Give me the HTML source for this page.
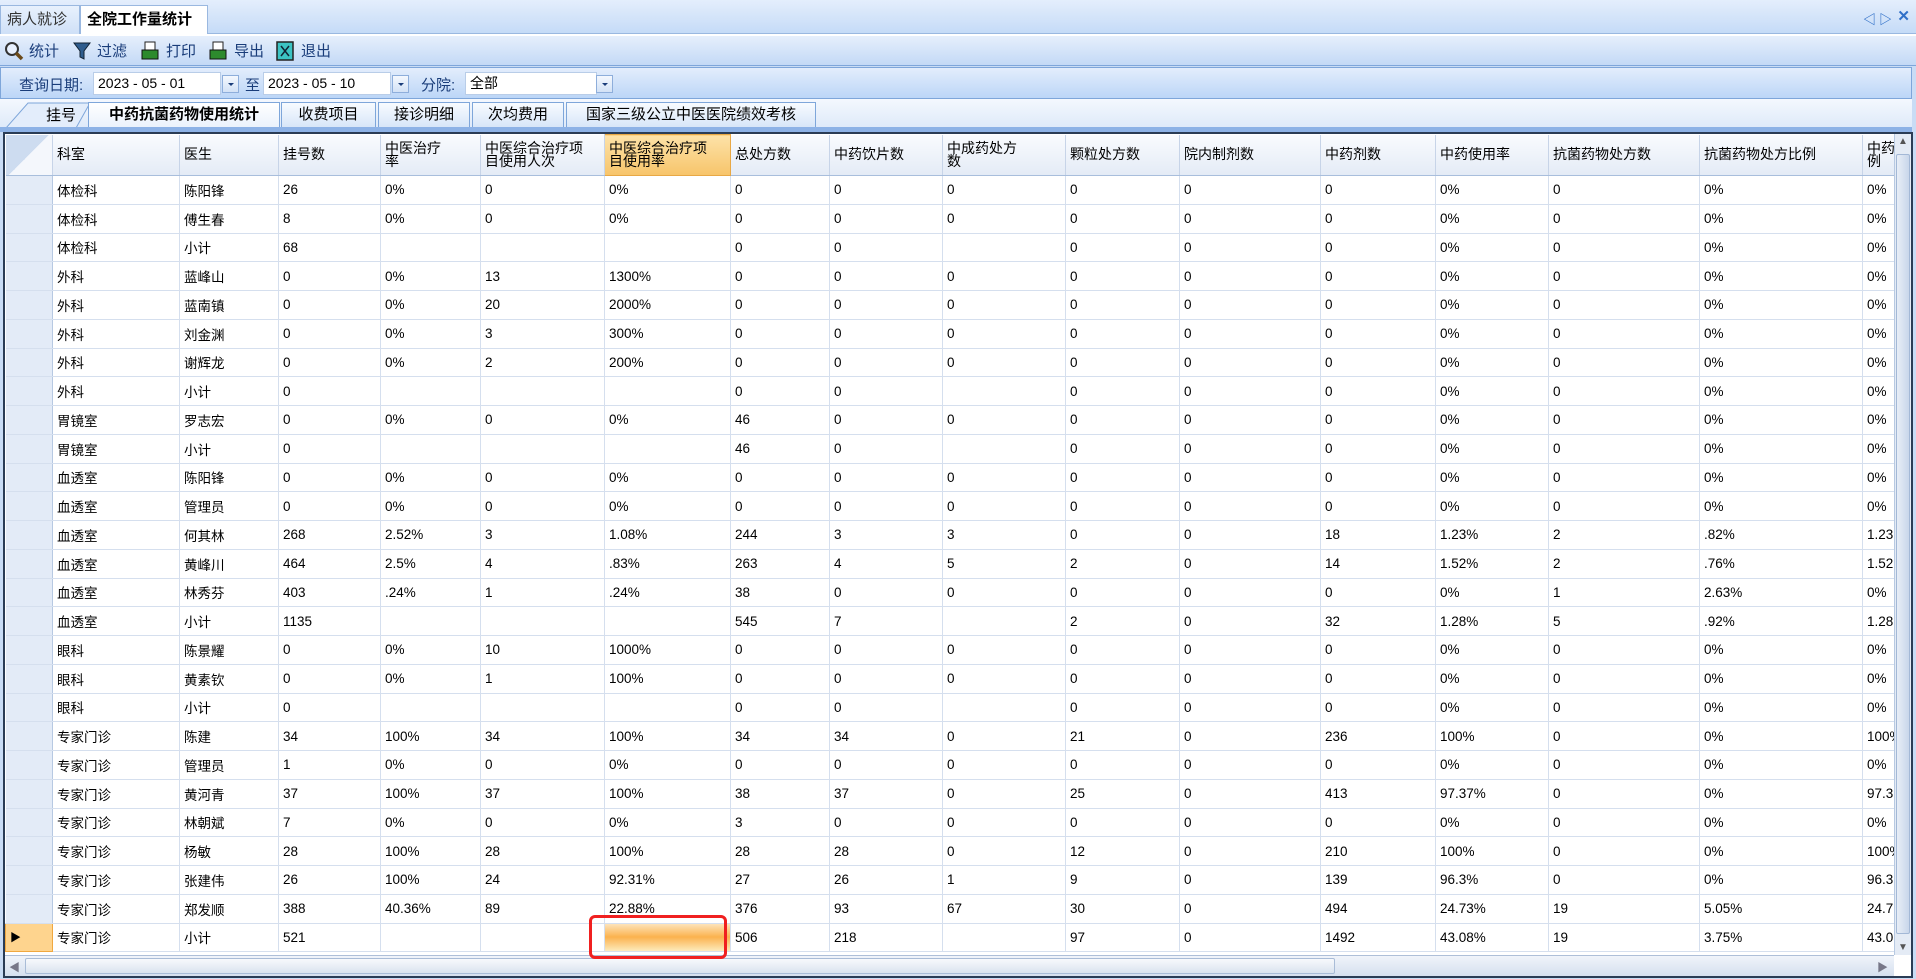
<!DOCTYPE html>
<html><head><meta charset="utf-8">
<style>
*{margin:0;padding:0;box-sizing:border-box}
body{width:1916px;height:979px;overflow:hidden;background:#c9dcf5;font-family:"Liberation Sans","Noto Sans CJK SC",sans-serif;font-size:14px;color:#000;position:relative}
.abs{position:absolute}
#title{left:0;top:0;width:1916px;height:34px;background:linear-gradient(#e4eefc,#c5dbf7);border-bottom:1px solid #9ab8e0}
.ttab{position:absolute;top:5px;height:29px;line-height:27px;font-size:15px;padding:0 6px}
#toolbar{left:0;top:34px;width:1916px;height:32px;background:linear-gradient(#e6effc,#c3d9f6);border-top:2px solid #fff;border-bottom:1px solid #7ea6da}
.tb{position:absolute;top:6px;font-size:15px;color:#1a3d7a;line-height:20px}
.ic{position:absolute;top:5px;width:20px;height:20px}
#filter{left:0;top:67px;width:1912px;height:32px;background:linear-gradient(#e3edfc,#bcd6f7);border:1px solid #7ea6da}
.lbl{position:absolute;top:6px;font-size:15px;color:#1a3d7a}
.inp{position:absolute;top:4px;height:23px;background:#fff;border:1px solid #b9cde8;font-size:14px;line-height:21px;padding-left:4px;white-space:pre}
.dd{position:absolute;top:7px;width:17px;height:18px;background:linear-gradient(#f4f8fe,#d3e2f6);border:1px solid #8eaedb}
.dd:after{content:"";position:absolute;left:5px;top:7px;border-left:3px solid transparent;border-right:3px solid transparent;border-top:3px solid #1a3d7a}
#tabs{left:0;top:99px;width:1912px;height:30px;background:linear-gradient(#f4f8fe,#dde9f9)}
.tab{position:absolute;top:3px;height:26px;line-height:24px;font-size:15px;text-align:center;background:linear-gradient(#f8fbff,#d6e5f8);border:1px solid #7ea6da;border-bottom:none}
#tabline{left:0;top:127px;width:1912px;height:5px;background:#8db2e6}
#grid{left:3px;top:132px;width:1910px;height:846px;background:#fff;border:2px solid #2a3c55;overflow:hidden}
table{border-collapse:collapse;table-layout:fixed;position:absolute;left:0;top:0}
td{border-right:1px solid #d5dfee;border-bottom:1px solid #d5dfee;height:28.75px;padding:0 0 0 4px;white-space:nowrap;overflow:hidden;font-size:13.5px;font-family:"Liberation Sans","Noto Sans CJK SC",sans-serif}
td:first-child{background:#e3ebf7;border-right:1px solid #b7c9e2}
tr.h td{height:41px;background:linear-gradient(#f9fbfe,#e4ebf6);border-right:1px solid #c7d4e8;border-bottom:1px solid #a8bedc;line-height:13px;font-size:14px;white-space:nowrap}
tr.h td.or{background:linear-gradient(#fde2a8,#f7c46a);border:1px solid #e8a845}
#vs{right:0;top:0;width:17px;height:821px;background:#e4ebf5;border-left:1px solid #b7c9e2}
#hs{left:0;bottom:0;width:1889px;height:21px;background:linear-gradient(#f0f4fa,#d5e0ef);border-top:1px solid #aebfd8}
</style></head><body>
<div id="title" class="abs">
 <div class="ttab" style="left:0;width:80px;background:linear-gradient(#e8f1fd,#cfe0f7);border:1px solid #9ab8e0;border-bottom:none;color:#333">病人就诊</div>
 <div class="ttab" style="left:80px;width:128px;background:#fff;border:1px solid #9ab8e0;border-bottom:none;font-weight:bold">全院工作量统计</div>
 <div class="abs" style="right:40px;top:9px;color:#3070c8;font-size:13px;font-weight:bold">◁</div>
 <div class="abs" style="right:24px;top:9px;color:#3070c8;font-size:13px;font-weight:bold">▷</div>
 <div class="abs" style="right:6px;top:7px;color:#3070c8;font-size:15px;font-weight:bold">✕</div>
</div>
<div id="toolbar" class="abs">
 <svg class="ic" style="left:4px" viewBox="0 0 20 20"><circle cx="8" cy="8" r="6" fill="#e8f1ff" stroke="#333" stroke-width="2"/><path d="M12 12l6 6" stroke="#6b4a1a" stroke-width="3.5"/></svg><span class="tb" style="left:29px">统计</span>
 <svg class="ic" style="left:72px" viewBox="0 0 20 20"><path d="M2 2h16l-6 8v8l-4-2v-6z" fill="#2f5d8e" stroke="#123" stroke-width="1"/></svg><span class="tb" style="left:97px">过滤</span>
 <svg class="ic" style="left:140px" viewBox="0 0 20 20"><rect x="5" y="1" width="10" height="9" fill="#fff" stroke="#222"/><rect x="2" y="9" width="16" height="9" fill="#2d8a2d" stroke="#111"/></svg><span class="tb" style="left:166px">打印</span>
 <svg class="ic" style="left:208px" viewBox="0 0 20 20"><rect x="5" y="1" width="10" height="9" fill="#fff" stroke="#222"/><rect x="2" y="9" width="16" height="9" fill="#2d8a2d" stroke="#111"/></svg><span class="tb" style="left:234px">导出</span>
 <svg class="ic" style="left:275px" viewBox="0 0 20 20"><rect x="2" y="1" width="16" height="18" fill="#3cc3c3" stroke="#222" stroke-width="1.5"/><path d="M6 5l8 10M14 5l-8 10" stroke="#123" stroke-width="1.5"/></svg><span class="tb" style="left:301px">退出</span>
</div>
<div id="filter" class="abs">
 <span class="lbl" style="left:18px">查询日期:</span>
 <div class="inp" style="left:92px;width:128px">2023 - 05 - 01</div><div class="dd" style="left:221px"></div>
 <span class="lbl" style="left:244px">至</span>
 <div class="inp" style="left:262px;width:128px">2023 - 05 - 10</div><div class="dd" style="left:391px"></div>
 <span class="lbl" style="left:420px">分院:</span>
 <div class="inp" style="left:464px;width:132px">全部</div><div class="dd" style="left:595px"></div>
</div>
<div id="tabs" class="abs">
 <svg class="abs" style="left:6px;top:3px" width="84" height="27"><path d="M0 26 L22 1 H84 L70 26" fill="#e3edfb" stroke="#7ea6da"/></svg>
 <span class="abs" style="left:46px;top:5px;font-size:15px">挂号</span>
 <div class="tab" style="left:88px;width:192px;background:linear-gradient(#fff,#e9f1fc);font-weight:bold;height:27px">中药抗菌药物使用统计</div>
 <div class="tab" style="left:281px;width:95px">收费项目</div>
 <div class="tab" style="left:378px;width:92px">接诊明细</div>
 <div class="tab" style="left:472px;width:92px">次均费用</div>
 <div class="tab" style="left:566px;width:250px">国家三级公立中医医院绩效考核</div>
</div>
<div id="tabline" class="abs"></div>
<div id="grid" class="abs">
<table style="width:1890px">
<colgroup><col style="width:47px"><col style="width:127px"><col style="width:99px"><col style="width:102px"><col style="width:100px"><col style="width:124px"><col style="width:126px"><col style="width:99px"><col style="width:113px"><col style="width:123px"><col style="width:114px"><col style="width:141px"><col style="width:115px"><col style="width:113px"><col style="width:151px"><col style="width:163px"><col style="width:33px"></colgroup>
<tr class="h"><td style="background:linear-gradient(135deg,#cddcf0 50%,#f4f7fc 50%)"></td><td>科室</td><td>医生</td><td>挂号数</td><td>中医治疗<br>率</td><td>中医综合治疗项<br>目使用人次</td><td class="or">中医综合治疗项<br>目使用率</td><td>总处方数</td><td>中药饮片数</td><td>中成药处方<br>数</td><td>颗粒处方数</td><td>院内制剂数</td><td>中药剂数</td><td>中药使用率</td><td>抗菌药物处方数</td><td>抗菌药物处方比例</td><td>中药<br>例</td></tr>
<tr><td></td><td>体检科</td><td>陈阳锋</td><td>26</td><td>0%</td><td>0</td><td>0%</td><td>0</td><td>0</td><td>0</td><td>0</td><td>0</td><td>0</td><td>0%</td><td>0</td><td>0%</td><td>0%</td></tr>
<tr><td></td><td>体检科</td><td>傅生春</td><td>8</td><td>0%</td><td>0</td><td>0%</td><td>0</td><td>0</td><td>0</td><td>0</td><td>0</td><td>0</td><td>0%</td><td>0</td><td>0%</td><td>0%</td></tr>
<tr><td></td><td>体检科</td><td>小计</td><td>68</td><td></td><td></td><td></td><td>0</td><td>0</td><td></td><td>0</td><td>0</td><td>0</td><td>0%</td><td>0</td><td>0%</td><td>0%</td></tr>
<tr><td></td><td>外科</td><td>蓝峰山</td><td>0</td><td>0%</td><td>13</td><td>1300%</td><td>0</td><td>0</td><td>0</td><td>0</td><td>0</td><td>0</td><td>0%</td><td>0</td><td>0%</td><td>0%</td></tr>
<tr><td></td><td>外科</td><td>蓝南镇</td><td>0</td><td>0%</td><td>20</td><td>2000%</td><td>0</td><td>0</td><td>0</td><td>0</td><td>0</td><td>0</td><td>0%</td><td>0</td><td>0%</td><td>0%</td></tr>
<tr><td></td><td>外科</td><td>刘金渊</td><td>0</td><td>0%</td><td>3</td><td>300%</td><td>0</td><td>0</td><td>0</td><td>0</td><td>0</td><td>0</td><td>0%</td><td>0</td><td>0%</td><td>0%</td></tr>
<tr><td></td><td>外科</td><td>谢辉龙</td><td>0</td><td>0%</td><td>2</td><td>200%</td><td>0</td><td>0</td><td>0</td><td>0</td><td>0</td><td>0</td><td>0%</td><td>0</td><td>0%</td><td>0%</td></tr>
<tr><td></td><td>外科</td><td>小计</td><td>0</td><td></td><td></td><td></td><td>0</td><td>0</td><td></td><td>0</td><td>0</td><td>0</td><td>0%</td><td>0</td><td>0%</td><td>0%</td></tr>
<tr><td></td><td>胃镜室</td><td>罗志宏</td><td>0</td><td>0%</td><td>0</td><td>0%</td><td>46</td><td>0</td><td>0</td><td>0</td><td>0</td><td>0</td><td>0%</td><td>0</td><td>0%</td><td>0%</td></tr>
<tr><td></td><td>胃镜室</td><td>小计</td><td>0</td><td></td><td></td><td></td><td>46</td><td>0</td><td></td><td>0</td><td>0</td><td>0</td><td>0%</td><td>0</td><td>0%</td><td>0%</td></tr>
<tr><td></td><td>血透室</td><td>陈阳锋</td><td>0</td><td>0%</td><td>0</td><td>0%</td><td>0</td><td>0</td><td>0</td><td>0</td><td>0</td><td>0</td><td>0%</td><td>0</td><td>0%</td><td>0%</td></tr>
<tr><td></td><td>血透室</td><td>管理员</td><td>0</td><td>0%</td><td>0</td><td>0%</td><td>0</td><td>0</td><td>0</td><td>0</td><td>0</td><td>0</td><td>0%</td><td>0</td><td>0%</td><td>0%</td></tr>
<tr><td></td><td>血透室</td><td>何其林</td><td>268</td><td>2.52%</td><td>3</td><td>1.08%</td><td>244</td><td>3</td><td>3</td><td>0</td><td>0</td><td>18</td><td>1.23%</td><td>2</td><td>.82%</td><td>1.23</td></tr>
<tr><td></td><td>血透室</td><td>黄峰川</td><td>464</td><td>2.5%</td><td>4</td><td>.83%</td><td>263</td><td>4</td><td>5</td><td>2</td><td>0</td><td>14</td><td>1.52%</td><td>2</td><td>.76%</td><td>1.52</td></tr>
<tr><td></td><td>血透室</td><td>林秀芬</td><td>403</td><td>.24%</td><td>1</td><td>.24%</td><td>38</td><td>0</td><td>0</td><td>0</td><td>0</td><td>0</td><td>0%</td><td>1</td><td>2.63%</td><td>0%</td></tr>
<tr><td></td><td>血透室</td><td>小计</td><td>1135</td><td></td><td></td><td></td><td>545</td><td>7</td><td></td><td>2</td><td>0</td><td>32</td><td>1.28%</td><td>5</td><td>.92%</td><td>1.28</td></tr>
<tr><td></td><td>眼科</td><td>陈景耀</td><td>0</td><td>0%</td><td>10</td><td>1000%</td><td>0</td><td>0</td><td>0</td><td>0</td><td>0</td><td>0</td><td>0%</td><td>0</td><td>0%</td><td>0%</td></tr>
<tr><td></td><td>眼科</td><td>黄素钦</td><td>0</td><td>0%</td><td>1</td><td>100%</td><td>0</td><td>0</td><td>0</td><td>0</td><td>0</td><td>0</td><td>0%</td><td>0</td><td>0%</td><td>0%</td></tr>
<tr><td></td><td>眼科</td><td>小计</td><td>0</td><td></td><td></td><td></td><td>0</td><td>0</td><td></td><td>0</td><td>0</td><td>0</td><td>0%</td><td>0</td><td>0%</td><td>0%</td></tr>
<tr><td></td><td>专家门诊</td><td>陈建</td><td>34</td><td>100%</td><td>34</td><td>100%</td><td>34</td><td>34</td><td>0</td><td>21</td><td>0</td><td>236</td><td>100%</td><td>0</td><td>0%</td><td>100%</td></tr>
<tr><td></td><td>专家门诊</td><td>管理员</td><td>1</td><td>0%</td><td>0</td><td>0%</td><td>0</td><td>0</td><td>0</td><td>0</td><td>0</td><td>0</td><td>0%</td><td>0</td><td>0%</td><td>0%</td></tr>
<tr><td></td><td>专家门诊</td><td>黄河青</td><td>37</td><td>100%</td><td>37</td><td>100%</td><td>38</td><td>37</td><td>0</td><td>25</td><td>0</td><td>413</td><td>97.37%</td><td>0</td><td>0%</td><td>97.3</td></tr>
<tr><td></td><td>专家门诊</td><td>林朝斌</td><td>7</td><td>0%</td><td>0</td><td>0%</td><td>3</td><td>0</td><td>0</td><td>0</td><td>0</td><td>0</td><td>0%</td><td>0</td><td>0%</td><td>0%</td></tr>
<tr><td></td><td>专家门诊</td><td>杨敏</td><td>28</td><td>100%</td><td>28</td><td>100%</td><td>28</td><td>28</td><td>0</td><td>12</td><td>0</td><td>210</td><td>100%</td><td>0</td><td>0%</td><td>100%</td></tr>
<tr><td></td><td>专家门诊</td><td>张建伟</td><td>26</td><td>100%</td><td>24</td><td>92.31%</td><td>27</td><td>26</td><td>1</td><td>9</td><td>0</td><td>139</td><td>96.3%</td><td>0</td><td>0%</td><td>96.3</td></tr>
<tr><td></td><td>专家门诊</td><td>郑发顺</td><td>388</td><td>40.36%</td><td>89</td><td>22.88%</td><td>376</td><td>93</td><td>67</td><td>30</td><td>0</td><td>494</td><td>24.73%</td><td>19</td><td>5.05%</td><td>24.7</td></tr>
<tr><td style="background:#fed48e;border:1px solid #f0a840;font-size:11px">▶</td><td>专家门诊</td><td>小计</td><td>521</td><td></td><td></td><td style="background:linear-gradient(#fde6be,#fbb24e 50%,#fde9b8)"></td><td>506</td><td>218</td><td></td><td>97</td><td>0</td><td>1492</td><td>43.08%</td><td>19</td><td>3.75%</td><td>43.0</td></tr>
</table>
<div id="vs" class="abs">
 <div class="abs" style="left:3px;top:2px;font-size:10px;color:#555">▲</div>
 <div class="abs" style="left:1px;top:20px;width:14px;height:780px;background:linear-gradient(90deg,#e8eef7,#c8d6ea);border:1px solid #a3b8d6;border-radius:2px"></div>
 <div class="abs" style="left:3px;bottom:2px;font-size:10px;color:#555">▼</div>
</div>
<div id="hs" class="abs">
 <div class="abs" style="left:4px;top:3px;font-size:11px;color:#778">◀</div>
 <div class="abs" style="left:20px;top:2px;width:1310px;height:16px;background:linear-gradient(#f7f9fc,#dae3ef);border:1px solid #a9bcd7;border-radius:2px"></div>
 <div class="abs" style="right:6px;top:3px;font-size:11px;color:#778">▶</div>
</div>
</div>
<div class="abs" style="left:589px;top:915px;width:138px;height:44px;border:3px solid #f02020;border-radius:6px"></div>
</body></html>
